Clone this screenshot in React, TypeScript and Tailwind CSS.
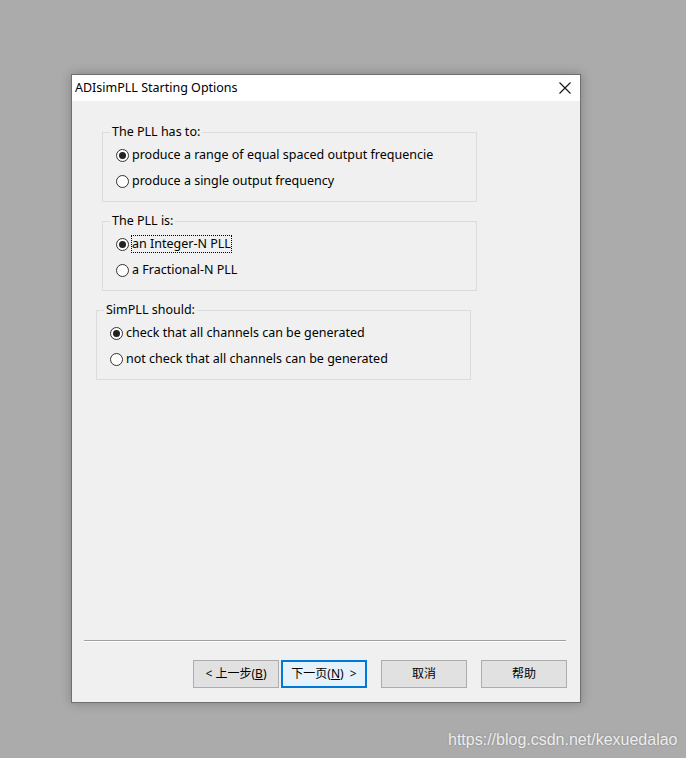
import React from "react";

const ui = { fontFamily: '"Noto Sans", "Noto Sans CJK SC", sans-serif' };

function Radio({ checked }: { checked?: boolean }) {
  return (
    <span className="flex h-[13px] w-[13px] shrink-0 items-center justify-center rounded-full border border-[#333] bg-white">
      {checked && <span className="h-[7px] w-[7px] rounded-full bg-[#222]" />}
    </span>
  );
}

type Opt = { label: string; checked?: boolean; focus?: boolean };

function Group({ title, options, className }: { title: string; options: Opt[]; className: string }) {
  return (
    <div className={`relative h-[70px] w-[375px] border border-[#dcdcdc] pb-[7px] pl-[13px] pt-[9px] ${className}`}>
      <span className="absolute -top-[10px] left-[7px] bg-[#f0f0f0] px-[2px] leading-[18px]">{title}</span>
      <div className="flex flex-col">
        {options.map((o) => (
          <div key={o.label} className="flex h-[26px] items-center gap-[2px]">
            <Radio checked={o.checked} />
            <span
              className={
                o.focus
                  ? "border border-dotted border-black px-0 leading-[16px]"
                  : "border border-transparent leading-[16px]"
              }
            >
              {o.label}
            </span>
          </div>
        ))}
      </div>
    </div>
  );
}

function Btn({ children, primary }: { children: React.ReactNode; primary?: boolean }) {
  return (
    <button
      className={
        primary
          ? "flex h-[28px] w-[86px] items-center justify-center border-2 border-[#0078d7] bg-[#e5f1fb] text-[12px] text-black"
          : "flex h-[28px] w-[86px] items-center justify-center border border-[#adadad] bg-[#e1e1e1] text-[12px] text-black"
      }
    >
      {children}
    </button>
  );
}

export default function App() {
  return (
    <div className="relative h-[758px] w-[686px] overflow-hidden bg-[#ababab] pl-[71px] pt-[74px]" style={ui}>
      <div className="flex h-[629px] w-[510px] flex-col border border-[#6f6f6f] shadow-[0_0_10px_rgba(0,0,0,0.25)] text-[12.5px] text-black">
        <div className="flex h-[26px] items-center justify-between bg-white pl-[3px] pr-[9px]">
          <span className="text-[12.5px]">ADIsimPLL Starting Options</span>
          <svg width="12" height="12" viewBox="0 0 12 12" stroke="#111" strokeWidth="1.1">
            <path d="M0.5 0.5 L11.5 11.5 M11.5 0.5 L0.5 11.5" />
          </svg>
        </div>
        <div className="flex flex-1 flex-col bg-[#f0f0f0]">
          <Group
            className="ml-[30px] mt-[31px]"
            title="The PLL has to:"
            options={[
              { label: "produce a range of equal spaced output frequencie", checked: true },
              { label: "produce a single output frequency" },
            ]}
          />
          <Group
            className="ml-[30px] mt-[19px]"
            title="The PLL is:"
            options={[
              { label: "an Integer-N PLL", checked: true, focus: true },
              { label: "a Fractional-N PLL" },
            ]}
          />
          <Group
            className="ml-[24px] mt-[19px]"
            title="SimPLL should:"
            options={[
              { label: "check that all channels can be generated", checked: true },
              { label: "not check that all channels can be generated" },
            ]}
          />
          <div className="flex-1" />
          <div className="ml-[12px] h-[2px] w-[482px] border-t border-[#a0a0a0] border-b border-b-white" />
          <div className="mb-[14px] ml-[121px] mt-[18px] flex">
            <Btn>
              &lt; 上一步(<span className="underline">B</span>)
            </Btn>
            <div className="ml-[2px]">
              <Btn primary>
                下一页(<span className="underline">N</span>)&nbsp; &gt;
              </Btn>
            </div>
            <div className="ml-[14px]">
              <Btn>取消</Btn>
            </div>
            <div className="ml-[14px]">
              <Btn>帮助</Btn>
            </div>
          </div>
        </div>
      </div>
      <span
        className="absolute left-[448px] top-[728px] text-[16px] text-[#eeeeee] [text-shadow:0_0_2px_rgba(0,0,0,0.25)]"
        style={{ fontFamily: '"Liberation Sans", Arial, sans-serif' }}
      >
        https://blog.csdn.net/kexuedalao
      </span>
    </div>
  );
}
